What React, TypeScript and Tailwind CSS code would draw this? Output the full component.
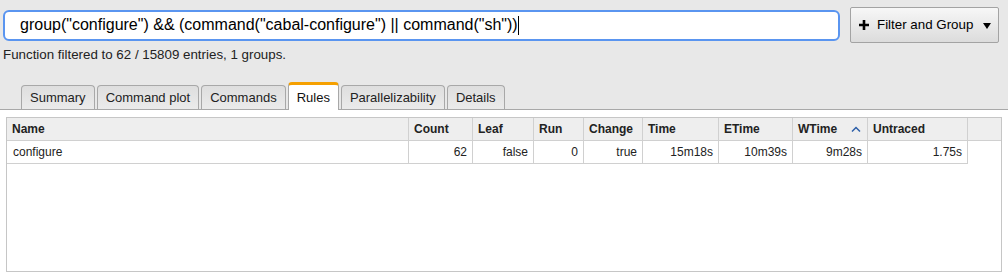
import React from "react";

const cols = [
  { name: "Name", w: "w-[402px]", val: "configure", left: true },
  { name: "Count", w: "w-[64px]", val: "62" },
  { name: "Leaf", w: "w-[61px]", val: "false" },
  { name: "Run", w: "w-[50px]", val: "0" },
  { name: "Change", w: "w-[59px]", val: "true" },
  { name: "Time", w: "w-[76px]", val: "15m18s" },
  { name: "ETime", w: "w-[74px]", val: "10m39s" },
  { name: "WTime", w: "w-[75px]", val: "9m28s", sort: true },
  { name: "Untraced", w: "w-[100px]", val: "1.75s" },
];

const tabs = ["Summary", "Command plot", "Commands", "Rules", "Parallelizability", "Details"];

export default function App() {
  return (
    <div className="w-[1008px] h-[278px] bg-[#e8e8e8] font-['Liberation_Sans',Arial,sans-serif] text-[#222] overflow-hidden flex flex-col">
      <div className="flex items-center pl-[3px] pr-[9px] pt-[7px] gap-[10px]">
        <div className="flex-1 h-[31px] border-2 border-[#5a95f0] rounded-[6px] bg-white pl-[15px] flex items-center text-[16px] text-black whitespace-pre">
          <span>group("configure") &amp;&amp; (command("cabal-configure") || command("sh"))</span>
          <span className="w-px h-[19px] bg-black"></span>
        </div>
        <div className="w-[149px] h-[36px] border border-[#a3a3a3] rounded-[2px] bg-gradient-to-b from-[#f7f7f7] to-[#dcdcdc] flex items-center pl-[7px] text-[13.33px] text-black">
          <svg width="12" height="12" viewBox="0 0 12 12" className="mr-[7px]">
            <path d="M6 1v10M1 6h10" stroke="#000" strokeWidth="2.6" />
          </svg>
          <span>Filter and Group</span>
          <svg width="8" height="6" viewBox="0 0 8 6" className="ml-[10px] mt-[2px]">
            <path d="M0 0h8L4 6z" fill="#000" />
          </svg>
        </div>
      </div>
      <div className="mt-[4px] pl-[3px] text-[13.33px] leading-[16px] text-[#222]">
        Function filtered to 62 / 15809 entries, 1 groups.
      </div>
      <div className="mt-[19px] h-[28px] flex items-end gap-[2px] pl-[21px] border-b border-[#a8a8a8]">
        {tabs.map((t) =>
          t === "Rules" ? (
            <div
              key={t}
              className="h-[28px] -mb-px px-[8px] bg-white border-x border-[#a8a8a8] border-t-[3px] border-t-[#f5a000] rounded-t-[4px] flex items-center text-[13px] text-[#111]"
            >
              {t}
            </div>
          ) : (
            <div
              key={t}
              className="h-[24px] px-[8px] bg-gradient-to-b from-[#dedede] to-[#ebebeb] border-x border-t border-[#a8a8a8] rounded-t-[4px] flex items-center text-[13px] text-[#222]"
            >
              {t}
            </div>
          )
        )}
      </div>
      <div className="flex-1 bg-white pt-[7px] px-[6px] pb-[6px] flex flex-col">
        <div className="flex-1 border border-[#c6c6c6] bg-white text-[12px]">
          <div className="flex h-[23px] bg-[#eeeeee] border-b border-[#d0d0d0]">
            {cols.map((c) => (
              <div
                key={c.name}
                className={`${c.w} shrink-0 border-r border-[#d0d0d0] px-[5px] flex items-center font-bold text-[#222]`}
              >
                <span>{c.name}</span>
                {c.sort && (
                  <svg width="10" height="6" viewBox="0 0 10 6" className="ml-[14px]">
                    <path d="M1 5.5L5 1.5L9 5.5" stroke="#2d5fa8" strokeWidth="1.5" fill="none" />
                  </svg>
                )}
              </div>
            ))}
            <div className="flex-1"></div>
          </div>
          <div className="flex h-[23px]">
            {cols.map((c) => (
              <div
                key={c.name}
                className={`${c.w} shrink-0 border-r border-b border-[#d0d0d0] px-[5px] flex items-center ${
                  c.left ? "justify-start pl-[6px]" : "justify-end"
                } text-[#222]`}
              >
                {c.val}
              </div>
            ))}
          </div>
        </div>
      </div>
    </div>
  );
}
